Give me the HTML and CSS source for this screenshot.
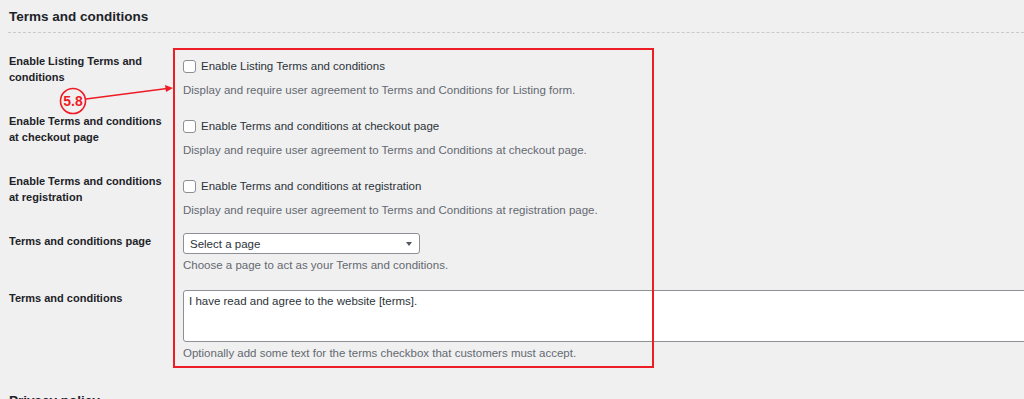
FILE: index.html
```html
<!DOCTYPE html>
<html lang="en">
<head>
    <meta charset="UTF-8">
    <meta name="viewport" content="width=device-width, initial-scale=1.0">
    <title>Terms and conditions</title>
    <link rel="stylesheet" href="styles.css">
</head>
<body>

    <div class="wrap">
        <h2 class="section-title">Terms and conditions</h2>
        <div class="divider"></div>

        <div class="form-table">
            <!-- row 1 -->
            <div class="label-cell r1">Enable Listing Terms and conditions</div>
            <div class="field-cell r1">
                <label class="check-line"><span class="checkbox"></span>Enable Listing Terms and conditions</label>
                <p class="desc">Display and require user agreement to Terms and Conditions for Listing form.</p>
            </div>

            <!-- row 2 -->
            <div class="label-cell r2">Enable Terms and conditions at checkout page</div>
            <div class="field-cell r2">
                <label class="check-line"><span class="checkbox"></span>Enable Terms and conditions at checkout page</label>
                <p class="desc">Display and require user agreement to Terms and Conditions at checkout page.</p>
            </div>

            <!-- row 3 -->
            <div class="label-cell r3">Enable Terms and conditions at registration</div>
            <div class="field-cell r3">
                <label class="check-line"><span class="checkbox"></span>Enable Terms and conditions at registration</label>
                <p class="desc">Display and require user agreement to Terms and Conditions at registration page.</p>
            </div>

            <!-- row 4 -->
            <div class="label-cell r4">Terms and conditions page</div>
            <div class="field-cell r4">
                <div class="select-box">
                    <span>Select a page</span>
                    <span class="caret"></span>
                </div>
                <p class="desc">Choose a page to act as your Terms and conditions.</p>
            </div>

            <!-- row 5 -->
            <div class="label-cell r5">Terms and conditions</div>
            <div class="field-cell r5">
                <div class="textarea-box">I have read and agree to the website [terms].</div>
                <p class="desc">Optionally add some text for the terms checkbox that customers must accept.</p>
            </div>

            <!-- annotation -->
            <div class="highlight"></div>
            <svg class="callout" width="124" height="48" viewBox="0 0 124 48">
                <circle cx="18" cy="26" r="12.5" fill="none" stroke="#ee1c25" stroke-width="1.6"/>
                <text x="18" y="31" text-anchor="middle" class="callout-num">5.8</text>
                <line x1="31" y1="24" x2="112" y2="13.6" stroke="#ee1c25" stroke-width="1.5"/>
                <polygon points="118,13 110,10 111,17" fill="#ee1c25"/>
            </svg>
        </div>

        <h2 class="section-title next">Privacy policy</h2>
    </div>

</body>
</html>
```

FILE: styles.css
```css
/* base */
* {
    margin: 0;
    padding: 0;
    box-sizing: border-box;
}

body {
    background: #f0f0f1;
    font-family: 'Liberation Sans', Arial, sans-serif;
    color: #1d2327;
    overflow: hidden;
}

.wrap {
    padding-top: 9px;
}

.section-title {
    font-size: 13.5px;
    line-height: 16px;
    font-weight: bold;
    color: #1d2327;
    padding-left: 9px;
}

.section-title.next {
    margin-top: 25px;
}

.divider {
    margin: 7px 0 0 8px;
    border-top: 1px dashed #c9cacc;
}

/* settings rows */
.form-table {
    position: relative;
    display: grid;
    grid-template-columns: 164px 1fr;
    padding-left: 9px;
    margin-top: 17px;
}

.label-cell {
    font-size: 11px;
    line-height: 16px;
    font-weight: bold;
    color: #1d2327;
    padding-top: 3px;
    padding-right: 8px;
}

.label-cell.r1 { grid-row: 1; padding-right: 20px; }
.label-cell.r2 { grid-row: 2; }
.label-cell.r3 { grid-row: 3; }
.label-cell.r4 { grid-row: 4; }
.label-cell.r5 { grid-row: 5; padding-top: 5px; }

.field-cell {
    grid-column: 2;
    padding: 6px 0 10px 10px;
    font-size: 11.5px;
}

.field-cell.r1 { grid-row: 1; }
.field-cell.r2 { grid-row: 2; }
.field-cell.r3 { grid-row: 3; }
.field-cell.r4 { grid-row: 4; padding-top: 3px; }
.field-cell.r5 { grid-row: 5; padding: 5px 0 5px 10px; }

.check-line {
    display: flex;
    align-items: center;
    height: 20px;
    color: #2c3338;
}

.checkbox {
    width: 13px;
    height: 13px;
    border: 1px solid #8c8f94;
    border-radius: 3px;
    background: #fff;
    margin-right: 5px;
}

.desc {
    line-height: 20px;
    color: #646970;
    margin-top: 4px;
}

.field-cell.r4 .desc,
.field-cell.r5 .desc {
    margin-top: 1px;
}

.select-box {
    width: 237px;
    height: 21px;
    border: 1px solid #8c8f94;
    border-radius: 3px;
    background: #fff;
    display: flex;
    align-items: center;
    justify-content: space-between;
    padding: 0 7px 0 6px;
    color: #2c3338;
}

.caret {
    width: 0;
    height: 0;
    border-left: 3.5px solid transparent;
    border-right: 3.5px solid transparent;
    border-top: 4px solid #50575e;
}

.textarea-box {
    width: 860px;
    height: 52px;
    border: 1px solid #8c8f94;
    border-radius: 3px;
    background: #fff;
    padding: 2px 5px;
    line-height: 16px;
    color: #2c3338;
}

/* annotation */
.highlight {
    grid-column: 2;
    grid-row: 1 / 6;
    width: 481px;
    margin-top: -2px;
    border: 2px solid #ee1c25;
    pointer-events: none;
}

.callout {
    position: absolute;
    left: 55px;
    top: 25px;
}

.callout-num {
    font-family: 'Liberation Sans', Arial, sans-serif;
    font-size: 14px;
    font-weight: bold;
    fill: #ee1c25;
}
```
